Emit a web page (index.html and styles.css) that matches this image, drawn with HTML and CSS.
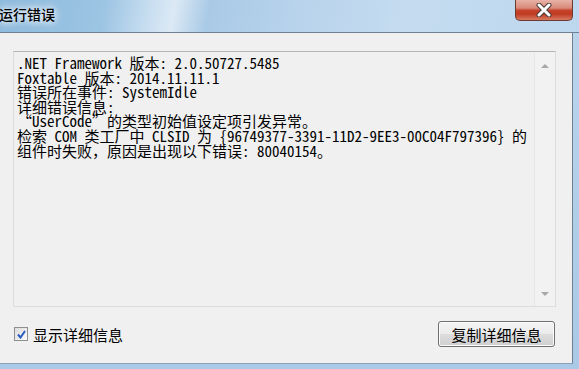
FILE: index.html
```html
<!DOCTYPE html>
<html lang="zh-CN">
<head>
    <meta charset="UTF-8">
    <title>运行错误</title>
    <link rel="stylesheet" href="styles.css">
</head>
<body>
    <div class="window">
        <div class="titlebar">
            <span class="title">运行错误</span>
            <div class="close-button">
                <svg width="20" height="14" viewBox="0 0 20 14">
                    <path d="M5 2 L15 12 M15 2 L5 12" stroke="#4a3a38" stroke-width="5" stroke-linecap="round"/>
                    <path d="M5 2 L15 12 M15 2 L5 12" stroke="#ffffff" stroke-width="3" stroke-linecap="round"/>
                </svg>
            </div>
        </div>

        <div class="client">
            <div class="detail-box">
                <div class="detail-text">.NET Framework 版本: 2.0.50727.5485
Foxtable 版本: 2014.11.11.1
错误所在事件: SystemIdle
详细错误信息:
“UserCode”的类型初始值设定项引发异常。
检索 COM 类工厂中 CLSID 为 {96749377-3391-11D2-9EE3-00C04F797396} 的
组件时失败，原因是出现以下错误: 80040154。</div>
                <div class="scrollbar">
                    <span class="arrow arrow-up"></span>
                    <span class="arrow arrow-down"></span>
                </div>
            </div>

            <div class="footer">
                <label class="check-row">
                    <span class="checkbox">
                        <svg width="9" height="9" viewBox="0 0 9 9">
                            <path d="M1 4.5 L3.5 7.5 L8 1" fill="none" stroke="#2a5cc0" stroke-width="2"/>
                        </svg>
                    </span>
                    显示详细信息
                </label>
                <button type="button" class="copy-button">复制详细信息</button>
            </div>
        </div>
    </div>
</body>
</html>
```

FILE: styles.css
```css
* {
    margin: 0;
    padding: 0;
    box-sizing: border-box;
}

body {
    width: 579px;
    height: 369px;
    overflow: hidden;
    font-family: "Noto Sans CJK SC", sans-serif;
}

.window {
    height: 369px;
    display: flex;
    flex-direction: column;
    background: linear-gradient(180deg, #bcd5ec 0%, #a9c9e6 100%);
}

.titlebar {
    height: 33px;
    display: flex;
    justify-content: space-between;
    align-items: flex-start;
    padding-right: 6px;
    background: linear-gradient(100deg, #8fbbdd 0%, #9cc4e3 18%, #c3dbef 25%, #dce9f5 30%, #a9cae6 36%, #b7d2eb 50%, #c5dcf0 70%, #bdd7ee 100%);
    border-bottom: 1px solid #6f8193;
}

.title {
    margin-top: 4px;
    margin-left: -1px;
    font-size: 14px;
    line-height: 20px;
    font-weight: 500;
    color: #000;
    text-shadow: 0 0 6px #fff, 0 0 10px #fff;
}

.close-button {
    width: 58px;
    height: 21px;
    display: flex;
    align-items: center;
    justify-content: center;
    border: 1px solid #6b3a32;
    border-top: none;
    border-radius: 0 0 5px 5px;
    background: linear-gradient(180deg, #e8b2a6 0%, #d98a7a 40%, #c6432b 52%, #c03a22 70%, #d87a62 100%);
}

.client {
    flex: 1;
    margin-right: 6px;
    margin-bottom: 5px;
    background: #f0f0f0;
    border-right: 1px solid #6f8193;
    border-bottom: 1px solid #8aa3ba;
    padding: 18px 16px 0 13px;
}

.detail-box {
    height: 256px;
    display: flex;
    border: 1px solid #dcdcdc;
    border-top-color: #b5b5b5;
    background: #f0f0f0;
}

.detail-text {
    flex: 1;
    padding: 4px 3px;
    font-family: "Noto Sans Mono CJK SC", "Noto Sans CJK SC", monospace;
    font-size: 15px;
    line-height: 14.6px;
    color: #000;
    white-space: pre;
    overflow: hidden;
}

.scrollbar {
    width: 21px;
    display: flex;
    flex-direction: column;
    justify-content: space-between;
    align-items: center;
    padding: 12px 0 10px;
    border-left: 1px solid #e6e6e6;
    background: #f2f2f2;
}

.arrow {
    width: 0;
    height: 0;
    border-left: 4px solid transparent;
    border-right: 4px solid transparent;
}

.arrow-up {
    border-bottom: 4px solid #a8a8a8;
}

.arrow-down {
    border-top: 4px solid #a8a8a8;
}

.footer {
    margin-top: 14px;
    height: 26px;
    display: flex;
    justify-content: space-between;
    align-items: center;
    padding-left: 1px;
    padding-right: 1px;
}

.check-row {
    display: flex;
    align-items: center;
    gap: 5px;
    font-size: 15px;
    color: #000;
}

.checkbox {
    width: 14px;
    height: 14px;
    display: flex;
    align-items: center;
    justify-content: center;
    border: 1px solid #8e8f8f;
    background: linear-gradient(135deg, #dcdcdc, #fafafa);
}

.copy-button {
    width: 117px;
    height: 26px;
    border: 1px solid #707070;
    border-radius: 3px;
    background: linear-gradient(180deg, #f4f4f4 0%, #ebebeb 48%, #dddddd 52%, #cfcfcf 100%);
    font-family: "Noto Sans CJK SC", sans-serif;
    font-size: 15px;
    color: #000;
    box-shadow: inset 0 0 0 1px #fbfbfb;
}
```
